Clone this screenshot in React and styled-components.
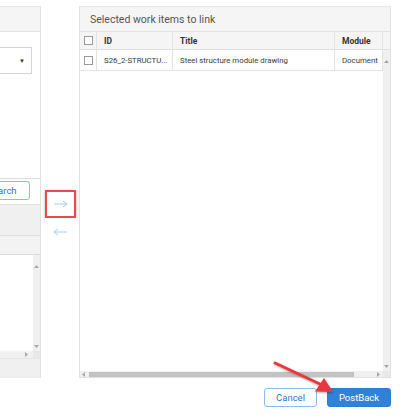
import React from 'react'
import styled, { createGlobalStyle } from 'styled-components'

const GlobalStyle = createGlobalStyle`
  html, body {
    margin: 0;
    padding: 0;
    background: #fff;
    font-family: Roboto, "Liberation Sans", Arial, sans-serif;
  }
`;

const columns = [
  { key: 'id', label: 'ID', width: 76 },
  { key: 'title', label: 'Title', width: 162 },
  { key: 'module', label: 'Module', width: 48 },
];

const rows = [
  { id: 'S26_2-STRUCTU...', title: 'Steel structure module drawing', module: 'Document' },
];

function ArrowGlyph({ dir }) {
  return (
    <svg width="15" height="8" viewBox="0 0 15 8">
      {dir === 'right' ? (
        <path d="M1 4 H14 M10 1 L14 4 L10 7" fill="none" stroke="#a9c9ee" strokeWidth="1" />
      ) : (
        <path d="M14 4 H1 M5 1 L1 4 L5 7" fill="none" stroke="#a9c9ee" strokeWidth="1" />
      )}
    </svg>
  );
}

function Tri({ dir }) {
  const d = {
    up: 'M0 4 L2.5 1 L5 4 Z',
    down: 'M0 1 L2.5 4 L5 1 Z',
    left: 'M4 0 L1 2.5 L4 5 Z',
    right: 'M1 0 L4 2.5 L1 5 Z',
  }[dir];
  return (
    <svg width="5" height="5" viewBox="0 0 5 5">
      <path d={d} fill="#a8a8a8" />
    </svg>
  );
}

export default function App() {
  return (
    <>
      <GlobalStyle />
      <Page>
        <Panels>
          <LeftPanel>
            <PanelHeader />
            <LeftBody>
              <Select>
                <span>▼</span>
              </Select>
            </LeftBody>
            <SearchRow>
              <OutlineButton $width={56}>Search</OutlineButton>
            </SearchRow>
            <Toolbar />
            <LeftHeadRow>
              <div />
              <HeadFiller />
            </LeftHeadRow>
            <LeftTableBody>
              <div />
              <VScroll>
                <Tri dir="up" />
                <Tri dir="down" />
              </VScroll>
            </LeftTableBody>
            <LeftHScroll>
              <Tri dir="right" />
              <Corner />
            </LeftHScroll>
            <LeftFooter />
          </LeftPanel>

          <Transfer>
            <MoveButton $highlight>
              <ArrowGlyph dir="right" />
            </MoveButton>
            <MoveButton>
              <ArrowGlyph dir="left" />
            </MoveButton>
          </Transfer>

          <RightPanel>
            <PanelHeader>Selected work items to link</PanelHeader>
            <HeadRow>
              <CheckCell>
                <Check />
              </CheckCell>
              {columns.map((c) => (
                <Cell key={c.key} $width={c.width} $head>
                  {c.label}
                </Cell>
              ))}
              <HeadFiller />
            </HeadRow>
            <GridBody>
              <Rows>
                {rows.map((r) => (
                  <DataRow key={r.id}>
                    <CheckCell>
                      <Check />
                    </CheckCell>
                    {columns.map((c) => (
                      <Cell key={c.key} $width={c.width}>
                        {r[c.key]}
                      </Cell>
                    ))}
                  </DataRow>
                ))}
              </Rows>
              <VScroll>
                <Tri dir="up" />
                <Tri dir="down" />
              </VScroll>
            </GridBody>
            <HScroll>
              <Tri dir="left" />
              <Thumb />
              <Tri dir="right" />
              <Corner />
            </HScroll>
          </RightPanel>
        </Panels>

        <Footer>
          <OutlineButton $width={53}>Cancel</OutlineButton>
          <PrimaryButton>PostBack</PrimaryButton>
        </Footer>

        <Annotation width="80" height="45" viewBox="0 0 80 45">
          <defs>
            <filter id="sh" x="-20%" y="-20%" width="140%" height="140%">
              <feDropShadow dx="0.5" dy="1" stdDeviation="0.8" floodColor="#000" floodOpacity="0.35" />
            </filter>
          </defs>
          <g filter="url(#sh)">
            <line x1="3" y1="3" x2="50" y2="25" stroke="#e8383d" strokeWidth="3" strokeLinecap="round" />
            <path d="M61 32 L43 31.5 L52 18 Z" fill="#e8383d" />
          </g>
        </Annotation>
      </Page>
    </>
  );
}

const Page = styled.div`
  position: relative;
  width: 400px;
  height: 417px;
  padding-top: 6px;
  box-sizing: border-box;
  overflow: hidden;
`;

const Panels = styled.div`
  display: flex;
  height: 372px;
`;

const LeftPanel = styled.div`
  width: 41px;
  flex: none;
  display: flex;
  flex-direction: column;
  border-right: 1px solid #e2e2e2;
  box-sizing: border-box;
  overflow: hidden;
`;

const PanelHeader = styled.div`
  height: 26px;
  flex: none;
  box-sizing: border-box;
  background: #f5f5f5;
  border-top: 1px solid #e6e6e6;
  border-bottom: 1px solid #e2e2e2;
  padding-left: 10px;
  display: flex;
  align-items: center;
  font-size: 10.5px;
  color: #555;
  white-space: nowrap;
`;

const LeftBody = styled.div`
  height: 147px;
  flex: none;
  display: flex;
  justify-content: flex-end;
  align-items: flex-start;
  padding-top: 15px;
  padding-right: 8px;
  box-sizing: border-box;
  border-bottom: 1px solid #dcdcdc;
`;

const Select = styled.div`
  width: 60px;
  flex: none;
  height: 27px;
  box-sizing: border-box;
  border: 1px solid #d4d4d4;
  display: flex;
  align-items: center;
  justify-content: flex-end;
  padding-right: 6px;
  span {
    font-size: 6px;
    color: #333;
  }
`;

const SearchRow = styled.div`
  height: 25px;
  flex: none;
  display: flex;
  justify-content: flex-end;
  align-items: flex-start;
  padding-top: 2px;
  padding-right: 10px;
  box-sizing: border-box;
`;

const OutlineButton = styled.button`
  flex: none;
  width: ${(p) => p.$width}px;
  height: 19px;
  box-sizing: border-box;
  border: 1px solid #8dbcec;
  border-radius: 3px;
  background: #fff;
  color: #2a78c8;
  font-family: inherit;
  font-size: 9.5px;
  padding: 0;
  display: flex;
  align-items: center;
  justify-content: center;
`;

const PrimaryButton = styled.button`
  width: 64px;
  height: 19px;
  box-sizing: border-box;
  border: 1px solid #2b7dd4;
  border-radius: 3px;
  background: #2f82d9;
  color: #fff;
  font-family: inherit;
  font-size: 9.5px;
  padding: 0;
`;

const Toolbar = styled.div`
  height: 32px;
  flex: none;
  background: #f0f0f0;
  border-top: 1px solid #e4e4e4;
  border-bottom: 1px solid #dedede;
  box-sizing: border-box;
`;

const LeftHeadRow = styled.div`
  height: 19px;
  flex: none;
  display: flex;
  background: #f3f3f3;
  border-bottom: 1px solid #dcdcdc;
  box-sizing: border-box;
  div:first-child {
    flex: 1;
  }
`;

const LeftTableBody = styled.div`
  flex: 1;
  display: flex;
  min-height: 0;
  div:first-child {
    flex: 1;
  }
`;

const LeftHScroll = styled.div`
  height: 7px;
  flex: none;
  display: flex;
  align-items: center;
  justify-content: flex-end;
  background: #f0f0f0;
  svg {
    margin-right: 2px;
  }
`;

const LeftFooter = styled.div`
  height: 19px;
  flex: none;
  background: #f0f0f0;
  border-top: 1px solid #e6e6e6;
`;

const Transfer = styled.div`
  width: 38px;
  flex: none;
  display: flex;
  flex-direction: column;
  align-items: center;
  padding-top: 184px;
  box-sizing: border-box;
`;

const MoveButton = styled.div`
  width: 31px;
  height: 28px;
  box-sizing: border-box;
  display: flex;
  align-items: center;
  justify-content: center;
  background: #fff;
  border: ${(p) => (p.$highlight ? '2px solid #ea4a4c' : '2px solid transparent')};
  box-shadow: ${(p) => (p.$highlight ? '0 1px 3px rgba(0,0,0,0.3)' : 'none')};
`;

const RightPanel = styled.div`
  width: 312px;
  flex: none;
  display: flex;
  flex-direction: column;
  border: 1px solid #e2e2e2;
  border-top: none;
  box-sizing: border-box;
`;

const HeadRow = styled.div`
  height: 18px;
  flex: none;
  display: flex;
  background: #f5f5f5;
  border-bottom: 1px solid #e0e0e0;
  box-sizing: border-box;
`;

const CheckCell = styled.div`
  width: 17px;
  flex: none;
  box-sizing: border-box;
  display: flex;
  align-items: center;
  justify-content: center;
  border-right: 1px solid #e2e2e2;
`;

const Check = styled.div`
  width: 7px;
  height: 7px;
  border: 1px solid #9a9a9a;
  background: #fff;
`;

const Cell = styled.div`
  width: ${(p) => p.$width}px;
  flex: none;
  box-sizing: border-box;
  padding-left: 7px;
  display: flex;
  align-items: center;
  font-size: ${(p) => (p.$head ? '8.5px' : '7.8px')};
  white-space: nowrap;
  overflow: hidden;
  color: ${(p) => (p.$head ? '#333' : '#3a3a3a')};
  font-weight: ${(p) => (p.$head ? 700 : 400)};
  border-right: 1px solid #e2e2e2;
`;

const HeadFiller = styled.div`
  width: 7px;
  flex: none;
`;

const GridBody = styled.div`
  flex: 1;
  display: flex;
  min-height: 0;
`;

const Rows = styled.div`
  flex: 1;
  display: flex;
  flex-direction: column;
`;

const DataRow = styled.div`
  height: 21px;
  display: flex;
  border-bottom: 1px solid #e4e4e4;
  box-sizing: border-box;
`;

const VScroll = styled.div`
  width: 7px;
  flex: none;
  background: #f0f0f0;
  display: flex;
  flex-direction: column;
  justify-content: space-between;
  align-items: center;
  padding: 9px 0 2px;
  box-sizing: border-box;
`;

const HScroll = styled.div`
  height: 6px;
  flex: none;
  display: flex;
  align-items: center;
  background: #f0f0f0;
  padding-left: 1px;
  svg {
    flex: none;
  }
`;

const Thumb = styled.div`
  width: 265px;
  height: 5px;
  margin: 0 auto 0 3px;
  background: #c3c3c3;
`;

const Corner = styled.div`
  width: 7px;
  height: 100%;
  margin-left: 2px;
  background: #e8e8e8;
`;

const Footer = styled.div`
  display: flex;
  justify-content: flex-end;
  gap: 10px;
  padding: 10px 9px 0 0;
`;

const Annotation = styled.svg`
  position: absolute;
  left: 272px;
  top: 360px;
  overflow: visible;
`;
